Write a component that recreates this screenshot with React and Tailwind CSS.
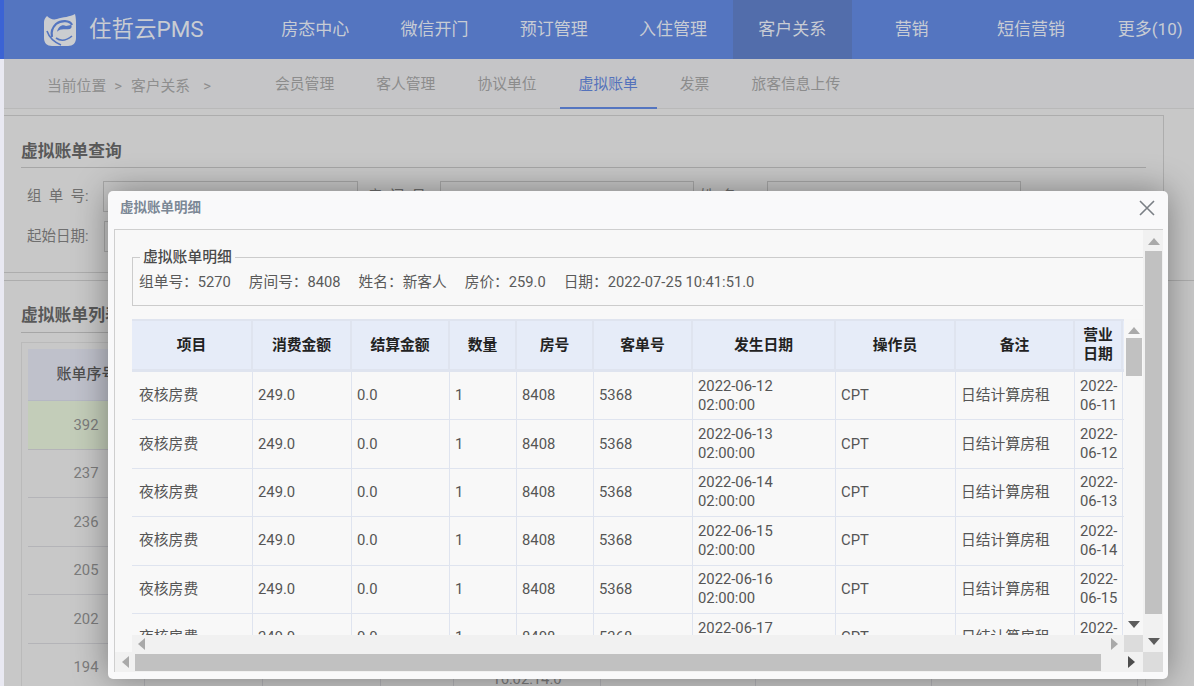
import React from "react";

const navItems = ["房态中心", "微信开门", "预订管理", "入住管理", "客户关系", "营销", "短信营销", "更多(10)"];
const tabs = ["会员管理", "客人管理", "协议单位", "虚拟账单", "发票", "旅客信息上传"];
const cols = ["w-[121px]", "w-[99px]", "w-[98px]", "w-[67px]", "w-[77px]", "w-[99px]", "w-[143px]", "w-[120px]", "w-[119px]", "w-[48px]"];
const heads = ["项目", "消费金额", "结算金额", "数量", "房号", "客单号", "发生日期", "操作员", "备注", "营业日期"];
const rows = [
  ["2022-06-12 02:00:00", "2022-06-11"],
  ["2022-06-13 02:00:00", "2022-06-12"],
  ["2022-06-14 02:00:00", "2022-06-13"],
  ["2022-06-15 02:00:00", "2022-06-14"],
  ["2022-06-16 02:00:00", "2022-06-15"],
  ["2022-06-17 02:00:00", "2022-06-16"],
];
const bgRows = ["392", "237", "236", "205", "202", "194"];
const bgCols = ["w-[117px]", "w-[118px]", "w-[118px]", "w-[73px]", "w-[147px]", "w-[155px]", "w-[176px]", "w-[206px]"];

function Tri({ dir, color = "#a9a9a9", className = "" }) {
  const pts = { up: "0,7 6,0 12,7", down: "0,0 12,0 6,7", left: "7,0 7,12 0,6", right: "0,0 0,12 7,6" }[dir];
  const v = dir === "up" || dir === "down";
  return (
    <svg width={v ? 12 : 7} height={v ? 7 : 12} viewBox={v ? "0 0 12 7" : "0 0 7 12"} className={className}>
      <polygon points={pts} fill={color} />
    </svg>
  );
}

function Logo() {
  return (
    <svg width="32" height="32" viewBox="0 0 32 32" className="mr-[13px]">
      <path d="M3 2 C6 5 9 6 13 5 C19 3 26 3 31 0 C32 4 32 7 32 10 L32 24 C32 29 29 32 24 32 L8 32 C3 32 0 29 0 24 L0 8 C0 6 1 4 3 2 Z" fill="#cbcdd0" />
      <path d="M28 11 C26 6 17 6 12 10 C8 14 7 19 8 23" stroke="#5475c0" strokeWidth="2.2" fill="none" />
      <path d="M22 12 C18 10 14 13 13 18 C16 14 22 16 26 15 C28 14 28 12 27 11 Z" fill="#5475c0" />
      <path d="M12 24 C16 27 22 27 28 22" stroke="#5475c0" strokeWidth="1.6" fill="none" />
      <path d="M3 17 C5 23 10 28 17 31" stroke="#5475c0" strokeWidth="1.6" fill="none" />
    </svg>
  );
}

function TopBar() {
  return (
    <div className="h-[59px] shrink-0 bg-[#5475c0] flex items-center">
      <div className="w-[251.5px] shrink-0 pl-[40px] flex items-center text-[#c9ccd2]">
        <Logo />
        <span className="text-[22.5px] leading-none">住哲云PMS</span>
      </div>
      <div className="flex h-full">
        {navItems.map((n) => (
          <div
            key={n}
            className={`w-[119.3px] shrink-0 flex items-center justify-center text-[17px] text-[#c8ccd4] ${n === "客户关系" ? "bg-[#526dab]" : ""}`}
          >
            {n}
          </div>
        ))}
      </div>
    </div>
  );
}

function SubNav() {
  return (
    <div className="h-[50px] shrink-0 border-b border-[#b9b9b9] flex bg-[#c5c5c7] text-[14.8px] text-[#8c8c8c]">
      <div className="w-[252px] pl-[43px] pt-[16px] text-[#8e8e8e] flex items-start">
        <span>当前位置</span>
        <span className="ml-[8px]">&gt;</span>
        <span className="ml-[9px]">客户关系</span>
        <span className="ml-[13px]">&gt;</span>
      </div>
      <div className="flex gap-[4px]">
        {tabs.map((t) => (
          <div
            key={t}
            className={`px-[19px] pt-[14px] h-[50px] border-b-2 ${t === "虚拟账单" ? "text-[#5472bb] border-[#5475c0]" : "border-transparent"}`}
          >
            {t}
          </div>
        ))}
      </div>
    </div>
  );
}

function SearchField({ label, labelW, inputW }) {
  return (
    <div className="flex items-center">
      <div className={`${labelW} text-[#6f6f6f] text-[14.5px]`}>{label}</div>
      <div className={`${inputW} h-[31px] border border-[#a8a8a8]`} />
    </div>
  );
}

function SearchPanel() {
  return (
    <div className="mt-[6px] h-[158px] shrink-0 mr-[30px] border-t border-r border-b border-[#adadad] pl-[17px] pr-[17px] pt-[23px]">
      <div className="h-[29px] border-b border-[#a6a6a6] text-[16.8px] font-bold text-[#595959] leading-[24px]">虚拟账单查询</div>
      <div className="flex mt-[13px] pl-[6px]">
        <SearchField label="组&nbsp;&nbsp;单&nbsp;&nbsp;号:" labelW="w-[76px]" inputW="w-[255px]" />
        <SearchField label="房&nbsp;&nbsp;间&nbsp;&nbsp;号:" labelW="w-[82px] pl-[10px]" inputW="w-[254px]" />
        <SearchField label="姓&nbsp;&nbsp;名:" labelW="w-[73px] pl-[6px]" inputW="w-[254px]" />
      </div>
      <div className="flex mt-[9px] pl-[6px]">
        <SearchField label="起始日期:" labelW="w-[77px]" inputW="w-[255px]" />
      </div>
    </div>
  );
}

function BgList() {
  return (
    <div className="mt-[7px] flex-1 min-h-0 border-t border-[#adadad] pl-[17px] pr-[48px] pt-[22px]">
      <div className="h-[30px] border-b border-[#a6a6a6] text-[16.8px] font-bold text-[#595959] leading-[24px]">虚拟账单列表</div>
      <div className="mt-[9px] border border-[#bababa] pl-[6px] pt-[6px]">
        <div className="h-[52px] bg-[#bfc1cb] flex border-b border-[#b5b8c4] text-[#4e4e4e] text-[15px] font-medium">
          <div className="w-[117px] flex items-center justify-center">账单序号</div>
        </div>
        {bgRows.map((r, i) => (
          <div key={r} className={`h-[48.5px] flex border-b border-[#b4b4b8] text-[#7c7c7c] ${i === 0 ? "bg-[#c3cdb9]" : ""}`}>
            {bgCols.map((c, j) => (
              <div key={j} className={`${c} h-full border-r border-[#b4b4b8] flex items-center justify-center text-center leading-[20px]`}>
                {j === 0 ? r : j === 4 && i === 5 ? <span className="block pt-[24px]">16:02:14.0</span> : ""}
              </div>
            ))}
          </div>
        ))}
      </div>
    </div>
  );
}

function InnerTable() {
  return (
    <div className="w-[992px] h-[316px] overflow-hidden">
      <div className="flex h-[53px] bg-[#e6ecf8] border-b-[3px] border-t-2 border-[#dfe4ef] text-[#222222] font-bold text-[14.8px]">
        {heads.map((h, i) => (
          <div
            key={h}
            className={`${cols[i]} shrink-0 flex items-center justify-center text-center leading-[19px] border-r-2 border-[#dfe4ef] ${i === 9 ? "px-[8px]" : ""}`}
          >
            {h}
          </div>
        ))}
      </div>
      {rows.map(([d, b]) => {
        const vals = ["夜核房费", "249.0", "0.0", "1", "8408", "5368", d, "CPT", "日结计算房租", b];
        return (
          <div key={d} className="flex h-[48.4px] border-b border-[#dfe4ef] text-[#555555]">
            {vals.map((v, i) => (
              <div
                key={i}
                className={`${cols[i]} shrink-0 flex items-center leading-[19px] border-r border-[#dfe4ef] pr-[2px] ${i === 0 ? "pl-[7px]" : "pl-[5px]"}`}
              >
                <span className={`block ${i === 6 ? "w-[90px]" : ""}`}>{v}</span>
              </div>
            ))}
          </div>
        );
      })}
    </div>
  );
}

function Modal() {
  return (
    <div className="absolute left-[108px] top-[191px] w-[1060px] h-[488px] rounded-[5px] bg-[#f9f9fa] shadow-[0_0_34px_rgba(0,0,0,0.38)] flex flex-col">
      <div className="h-[38px] shrink-0 flex items-center justify-between pl-[12px] pr-[13px]">
        <span className="text-[13.5px] font-bold text-[#7c8896] leading-none -mt-[4px]">虚拟账单明细</span>
        <svg width="16" height="16" viewBox="0 0 16 16" className="-mt-[4px]">
          <path d="M1 1 L15 15 M15 1 L1 15" stroke="#7a7f85" strokeWidth="1.6" />
        </svg>
      </div>
      <div className="ml-[6px] mr-[5px] h-[443px] border-l border-t border-[#cfcfcf] flex flex-col">
        <div className="flex h-[422px]">
          <div className="w-[1028px] pl-[17px] bg-[#f8f8f8] overflow-hidden">
            <fieldset className="mt-[17px] h-[59px] border border-r-0 border-[#cccccc] pl-[6px] pb-[10px]">
              <legend className="px-[3px] ml-[1px] text-[14.8px] leading-[20px] font-medium text-[#4a4a4a]">虚拟账单明细</legend>
              <div className="flex gap-[18px] text-[#5a5a5a] text-[14.7px] leading-[20px] mt-[5px]">
                <span>组单号：5270</span>
                <span>房间号：8408</span>
                <span>姓名：新客人</span>
                <span>房价：259.0</span>
                <span>日期：2022-07-25 10:41:51.0</span>
              </div>
            </fieldset>
            <div className="flex mt-[13px]">
              <InnerTable />
              <div className="w-[19px] h-[316px] bg-[#f7f7f7] flex flex-col items-center pt-[8px]">
                <Tri dir="up" />
                <div className="w-[16px] h-[38px] bg-[#c1c1c1] mt-[4px]" />
                <div className="mt-auto mb-[7px]"><Tri dir="down" color="#5c5c5c" /></div>
              </div>
            </div>
            <div className="flex h-[18px] bg-[#f1f1f1]">
              <div className="w-[992px] flex items-center justify-between px-[6px]">
                <Tri dir="left" />
                <Tri dir="right" />
              </div>
              <div className="w-[19px] bg-[#dcdcdc]" />
            </div>
          </div>
          <div className="w-[20px] bg-[#f1f1f1] flex flex-col items-center pt-[8px] pl-[1px] relative">
            <Tri dir="up" />
            <div className="w-[17px] h-[363px] bg-[#c1c1c1] mt-[6px]" />
            <div className="mt-[24px]"><Tri dir="down" color="#5c5c5c" /></div>
          </div>
        </div>
        <div className="h-[20px] flex bg-[#f1f1f1]">
          <div className="w-[1028px] flex items-center">
            <div className="w-[20px] flex justify-center"><Tri dir="left" /></div>
            <div className="w-[966px] h-[17px] bg-[#c1c1c1]" />
            <div className="flex-1 flex justify-end pr-[8px]"><Tri dir="right" color="#4c4c4c" /></div>
          </div>
          <div className="w-[20px] bg-[#dcdcdc]" />
        </div>
      </div>
    </div>
  );
}

export default function App() {
  return (
    <div className="relative w-[1194px] h-[686px] overflow-hidden flex bg-[#c8c8c8] text-[14.8px] font-['Roboto','Noto_Sans_CJK_SC',sans-serif]">
      <div className="w-[4px] shrink-0 flex flex-col bg-[#e9e9f2]">
        <div className="h-[59px] bg-[#3b63d4]" />
      </div>
      <div className="flex-1 min-w-0 flex flex-col">
        <TopBar />
        <SubNav />
        <SearchPanel />
        <BgList />
      </div>
      <Modal />
    </div>
  );
}
